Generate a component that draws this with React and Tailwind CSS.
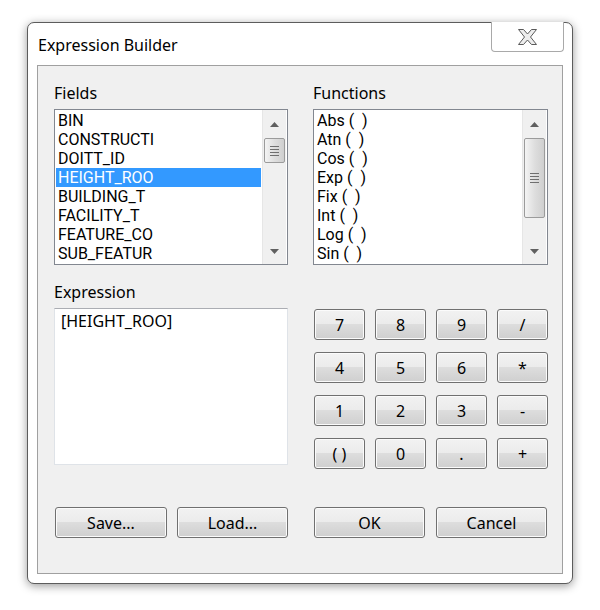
// Expression Builder dialog (Windows 7 / 8 style)

const fields = ['BIN', 'CONSTRUCTI', 'DOITT_ID', 'HEIGHT_ROO', 'BUILDING_T', 'FACILITY_T', 'FEATURE_CO', 'SUB_FEATUR'];
const functions = ['Abs (  )', 'Atn (  )', 'Cos (  )', 'Exp (  )', 'Fix (  )', 'Int (  )', 'Log (  )', 'Sin (  )'];
const keys = ['7', '8', '9', '/', '4', '5', '6', '*', '1', '2', '3', '-', '( )', '0', '.', '+'];

const btn =
  'flex items-center justify-center border border-[#707070] rounded-[3px] text-[16px] leading-none text-black shadow-[inset_0_0_0_1px_#fbfbfb] bg-[linear-gradient(to_bottom,#f2f2f2_0%,#ebebeb_50%,#dddddd_50%,#cfcfcf_100%)]';

function Arrow({ down }) {
  return (
    <svg width="9" height="5" viewBox="0 0 9 5" className="block">
      {down ? <polygon points="0,0 9,0 4.5,5" fill="#606060" /> : <polygon points="0,5 9,5 4.5,0" fill="#606060" />}
    </svg>
  );
}

function Scrollbar({ thumbHeight }) {
  return (
    <div className="flex w-[24px] flex-col bg-[#f0f0f0] border-l border-[#e6e6e6]">
      <div className="flex h-[28px] items-center justify-center">
        <Arrow />
      </div>
      <div className="flex-1 px-px">
        <div
          className="flex flex-col items-center justify-center gap-[2px] rounded-[2px] border border-[#9b9b9b] bg-linear-to-r from-[#f4f4f4] via-[#dedede] to-[#cfcfcf]"
          style={{ height: thumbHeight }}
        >
          <div className="h-px w-[9px] bg-[#6f6f6f]" />
          <div className="h-px w-[9px] bg-[#6f6f6f]" />
          <div className="h-px w-[9px] bg-[#6f6f6f]" />
          <div className="h-px w-[9px] bg-[#6f6f6f]" />
        </div>
      </div>
      <div className="flex h-[26px] items-center justify-center">
        <Arrow down />
      </div>
    </div>
  );
}

function ListBox({ items, selected, thumbHeight }) {
  return (
    <div className="flex h-[156px] border border-[#828790] bg-white pr-px">
      <div className="flex-1 overflow-hidden p-px font-['Roboto',sans-serif]">
        {items.map((item) => (
          <div
            key={item}
            className={
              'h-[19px] whitespace-pre pl-[2px] text-[16px] leading-[19px] ' +
              (item === selected ? 'bg-[#3399ff] text-white' : 'text-black')
            }
          >
            {item}
          </div>
        ))}
      </div>
      <Scrollbar thumbHeight={thumbHeight} />
    </div>
  );
}

export default function App() {
  return (
    <div className="min-h-[610px] bg-white pl-[27px] pt-[22px] font-['Segoe_UI','Noto_Sans',sans-serif]">
      <div className="flex w-[546px] flex-col rounded-[7px] border border-[#5c5c5c] bg-white shadow-[0_2px_10px_rgba(0,0,0,0.4)]">
        {/* title bar */}
        <div className="flex h-[42px] items-start justify-between">
          <div className="pl-[10px] pt-[12px] text-[16px] leading-[20px] text-black">Expression Builder</div>
          <div className="-mt-px mr-[8px] flex h-[30px] w-[73px] items-center justify-center rounded-b-[4px] border border-t-0 border-[#a9a9a9] bg-white">
            <svg width="19" height="16" viewBox="0 0 19 16">
              <polygon
                points="0.5,0.5 5.5,0.5 9.5,5 13.5,0.5 18.5,0.5 12.5,8 18.5,15.5 13.5,15.5 9.5,11 5.5,15.5 0.5,15.5 6.5,8"
                fill="#ededed"
                stroke="#595959"
                strokeWidth="1"
                strokeLinejoin="round"
              />
            </svg>
          </div>
        </div>

        {/* client area */}
        <div className="mx-[9px] mb-[9px] h-[509px] border border-[#a0a0a0] bg-[#f0f0f0] pl-[16px] pt-[17px]">
          <div className="flex gap-[25px]">
            <div className="flex w-[234px] flex-col">
              <div className="mb-[6px] text-[16px] leading-[20px] text-black">Fields</div>
              <ListBox items={fields} selected="HEIGHT_ROO" thumbHeight={25} />
            </div>
            <div className="flex w-[235px] flex-col">
              <div className="mb-[6px] text-[16px] leading-[20px] text-black">Functions</div>
              <ListBox items={functions} thumbHeight={80} />
            </div>
          </div>

          <div className="mt-[17px] flex h-[225px] items-start gap-[25px]">
            <div className="flex w-[234px] flex-col">
              <div className="mb-[6px] text-[16px] leading-[20px] text-black">Expression</div>
              <div className="h-[157px] border border-[#dfe3e8] border-t-[#abadb3] bg-white pl-[6px] pt-[2px] text-[16px] leading-[20px] text-black">
                [HEIGHT_ROO]
              </div>
            </div>
            <div className="pl-px pt-[27px]">
              <div className="grid grid-cols-[51px_51px_51px_51px] gap-x-[10px] gap-y-[12px]">
                {keys.map((k) => (
                  <button key={k} type="button" className={btn + ' h-[31px]'}>
                    {k}
                  </button>
                ))}
              </div>
            </div>
          </div>

          <div className="flex">
            <button type="button" className={btn + ' ml-px h-[31px] w-[112px]'}>Save...</button>
            <button type="button" className={btn + ' ml-[10px] h-[31px] w-[111px]'}>Load...</button>
            <button type="button" className={btn + ' ml-[26px] h-[31px] w-[111px]'}>OK</button>
            <button type="button" className={btn + ' ml-[11px] h-[31px] w-[111px]'}>Cancel</button>
          </div>
        </div>
      </div>
    </div>
  );
}
